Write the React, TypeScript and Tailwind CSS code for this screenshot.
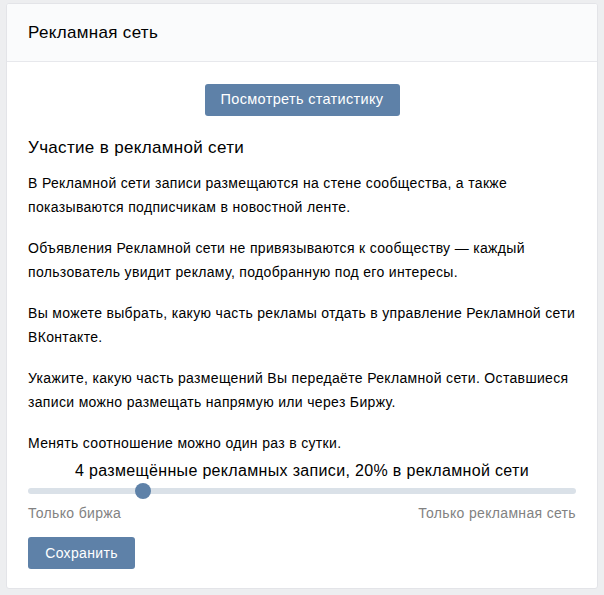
const font = { fontFamily: '"Liberation Sans", Arial, sans-serif' };

const Paragraph = ({ lines, first }: { lines: string[]; first?: boolean }) => (
  <p className={`text-[14px] leading-[24px] text-black ${first ? '' : 'mt-[17px]'}`}>
    {lines.map((line, i) => (
      <span key={i} className="block whitespace-nowrap">
        {line}
      </span>
    ))}
  </p>
);

const App = () => {
  const percent = 20;

  return (
    <div className="min-h-screen bg-[#edeef0] px-[6px] pt-[3px] pb-[6px] tracking-[0.33px]" style={font}>
      <div className="bg-white border border-[#e3e4e8] rounded-[3px] overflow-hidden">
        {/* header */}
        <div className="h-[58px] bg-[#fafbfc] border-b border-[#e7e8ec] flex items-center px-[21px]">
          <h1 className="text-[17px] text-black">Рекламная сеть</h1>
        </div>

        <div className="px-[21px] pt-[22px] pb-[19px]">
          <div className="flex justify-center">
            <button className="h-[32px] w-[195px] rounded-[3px] bg-[#5e81a8] text-white text-[14.5px]">
              Посмотреть статистику
            </button>
          </div>

          <h2 className="mt-[20px] text-[17px] leading-[24px] text-black">Участие в рекламной сети</h2>

          <div className="mt-[11px]">
            <Paragraph
              first
              lines={[
                'В Рекламной сети записи размещаются на стене сообщества, а также',
                'показываются подписчикам в новостной ленте.',
              ]}
            />
            <Paragraph
              lines={[
                'Объявления Рекламной сети не привязываются к сообществу — каждый',
                'пользователь увидит рекламу, подобранную под его интересы.',
              ]}
            />
            <Paragraph
              lines={[
                'Вы можете выбрать, какую часть рекламы отдать в управление Рекламной сети',
                'ВКонтакте.',
              ]}
            />
            <Paragraph
              lines={[
                'Укажите, какую часть размещений Вы передаёте Рекламной сети. Оставшиеся',
                'записи можно размещать напрямую или через Биржу.',
              ]}
            />
            <Paragraph lines={['Менять соотношение можно один раз в сутки.']} />
          </div>

          {/* slider */}
          <div className="mt-[6px] text-center text-[16px] leading-[20px] text-black">
            4 размещённые рекламных записи, {percent}% в рекламной сети
          </div>
          <div className="mt-[7px] relative h-[6px] rounded-full bg-[#dae1e8]">
            <div className="absolute left-[107px] top-1/2 -translate-y-1/2 w-[16px] h-[16px] rounded-full bg-[#5e81a8]" />
          </div>
          <div className="mt-[9px] flex justify-between text-[14px] leading-[20px] text-[#828282]">
            <span>Только биржа</span>
            <span>Только рекламная сеть</span>
          </div>

          <button className="mt-[14px] h-[32px] w-[107px] rounded-[3px] bg-[#5e81a8] text-white text-[14px]">
            Сохранить
          </button>
        </div>
      </div>
    </div>
  );
};

export default App;
